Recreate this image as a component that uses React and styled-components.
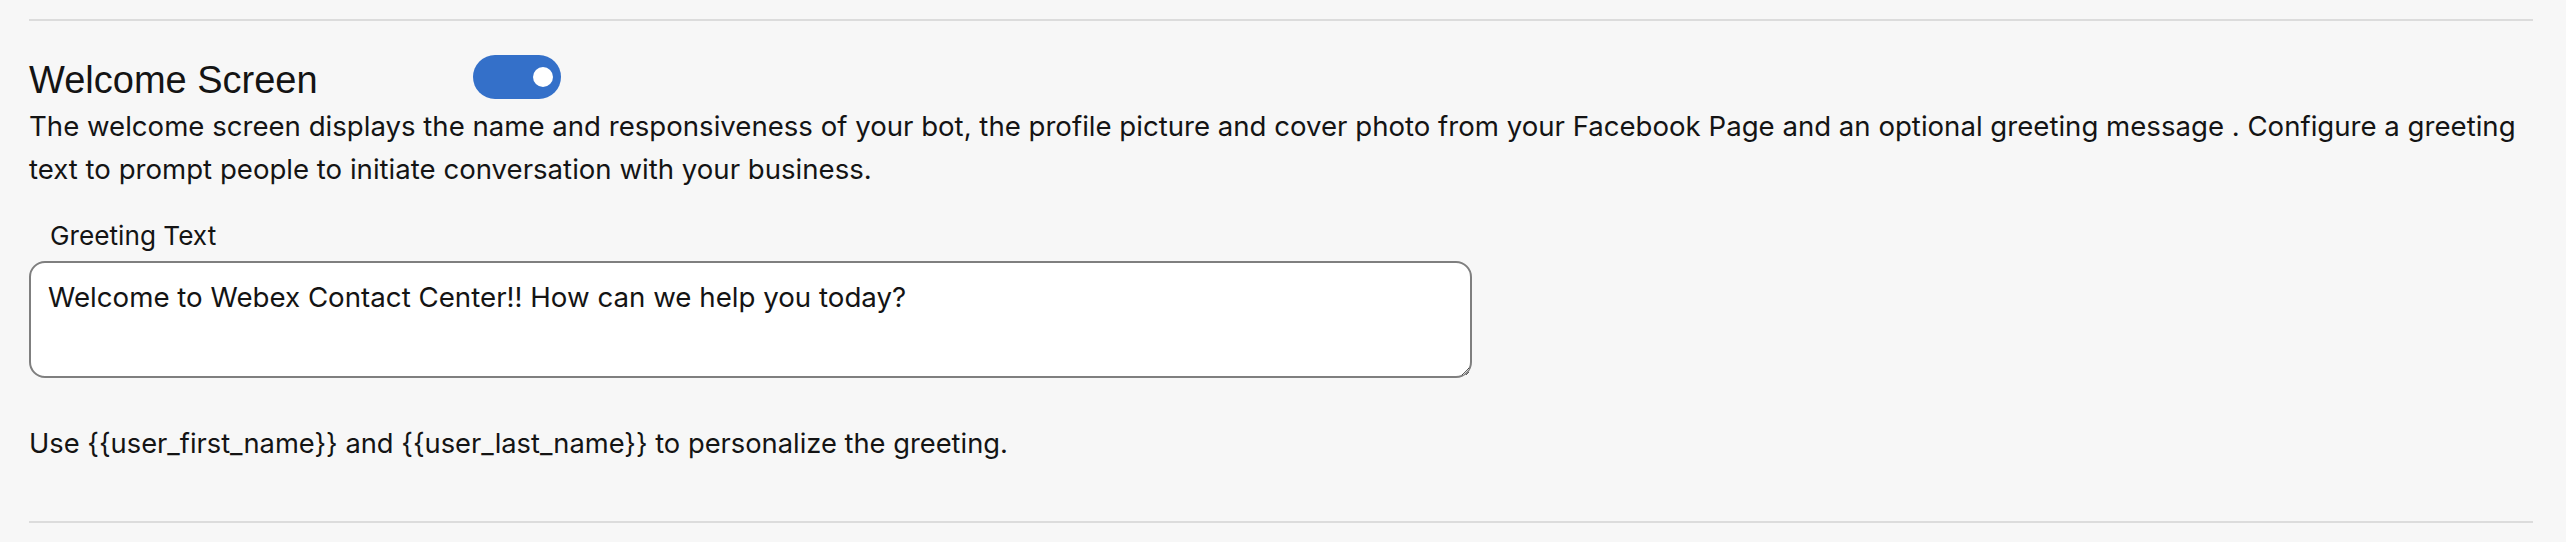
import React from 'react'
import styled, { createGlobalStyle } from 'styled-components'

const GlobalStyle = createGlobalStyle`
  html, body {
    margin: 0;
    padding: 0;
    background: #f7f7f7;
  }
  body {
    font-family: Inter, "Liberation Sans", Arial, sans-serif;
    color: #141414;
  }
`

const Page = styled.main`
  padding: 19px 33px 0 29px;
`

const Divider = styled.hr`
  margin: ${props => props.$top || 0}px 0 0;
  border: none;
  height: 2px;
  background: #dcdcdc;
`

const Header = styled.div`
  display: flex;
  align-items: flex-start;
  margin-top: 34px;
`

const Title = styled.h2`
  flex: none;
  width: 444px;
  margin: 0;
  font-family: "Liberation Sans", Arial, sans-serif;
  font-weight: 400;
  font-size: 38px;
  line-height: 50px;
`

const Switch = styled.button`
  flex: none;
  display: flex;
  align-items: center;
  justify-content: ${props => (props.$on ? 'flex-end' : 'flex-start')};
  width: 88px;
  height: 44px;
  padding: 0 8px;
  border: none;
  border-radius: 22px;
  background: ${props => (props.$on ? '#3470c9' : '#8c8c8c')};
  cursor: pointer;
`

const Knob = styled.span`
  width: 20px;
  height: 20px;
  border-radius: 50%;
  background: #fff;
`

const Description = styled.p`
  margin: 0;
  font-size: 27.6px;
  line-height: 43px;
`

const Label = styled.label`
  display: block;
  margin-top: 30px;
  padding-left: 21px;
  font-size: 26.2px;
  line-height: 30px;
`

const TextArea = styled.textarea`
  display: block;
  box-sizing: border-box;
  width: 1443px;
  height: 117px;
  margin-top: 10px;
  padding: 16px 17px;
  border: 2px solid #7f7f7f;
  border-radius: 16px;
  background: #fff;
  color: #141414;
  font-family: Inter, "Liberation Sans", Arial, sans-serif;
  font-size: 27.7px;
  line-height: 36px;
  resize: both;
  outline: none;
`

const Help = styled.p`
  margin: 44px 0 0;
  font-size: 27.3px;
  line-height: 43px;
`

export default function App() {
  const [on, setOn] = React.useState(true)

  return (
    <>
      <GlobalStyle />
      <Page>
        <Divider />
        <Header>
          <Title>Welcome Screen</Title>
          <Switch
            role="switch"
            aria-checked={on}
            $on={on}
            onClick={() => setOn(prev => !prev)}
          >
            <Knob />
          </Switch>
        </Header>
        <Description>
          The welcome screen displays the name and responsiveness of your bot, the profile picture and cover photo from your Facebook Page and an optional greeting message . Configure a greeting text to prompt people to initiate conversation with your business.
        </Description>
        <Label htmlFor="greeting">Greeting Text</Label>
        <TextArea
          id="greeting"
          defaultValue="Welcome to Webex Contact Center!! How can we help you today?"
        />
        <Help>
          Use {'{{user_first_name}}'} and {'{{user_last_name}}'} to personalize the greeting.
        </Help>
        <Divider $top={56} />
      </Page>
    </>
  )
}
